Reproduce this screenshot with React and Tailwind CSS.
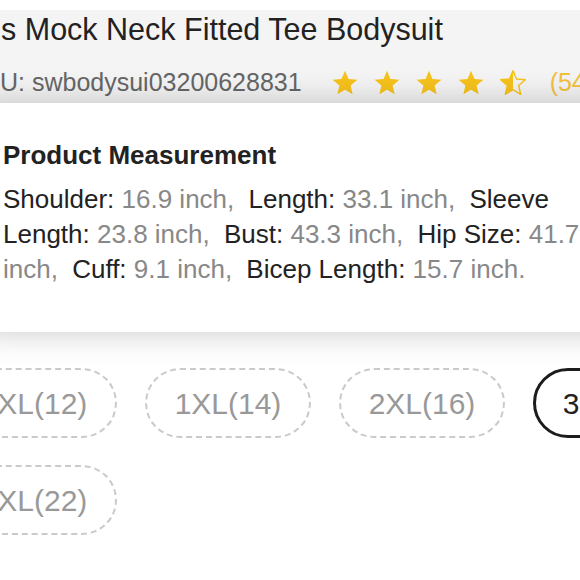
import React from "react";

const measurements = [
    ["Shoulder:", "16.9 inch,"],
    ["Length:", "33.1 inch,"],
    ["Sleeve Length:", "23.8 inch,"],
    ["Bust:", "43.3 inch,"],
    ["Hip Size:", "41.7 inch,"],
    ["Cuff:", "9.1 inch,"],
    ["Bicep Length:", "15.7 inch."],
];

const sizes = ["0XL(12)", "1XL(14)", "2XL(16)", "3XL(18)", "4XL(20)", "5XL(22)"];

const STAR = "M12 17.27L18.18 21l-1.64-7.03L22 9.24l-7.19-.61L12 2 9.19 8.63 2 9.24l5.46 4.73L5.82 21z";

const Star = ({ half }) => (
    <svg width="26" height="25" viewBox="1.5 1.5 21 20">
        <defs>
            <clipPath id="leftHalf">
                <rect x="0" y="0" width="12" height="24" />
            </clipPath>
        </defs>
        {half ? (
            <>
                <path d={STAR} fill="none" stroke="#f6c21c" strokeWidth="1.2" strokeLinejoin="round" />
                <path d={STAR} fill="#f6c21c" clipPath="url(#leftHalf)" />
            </>
        ) : (
            <path d={STAR} fill="#f6c21c" />
        )}
    </svg>
);

const App = () => {
    return (
        <div className="relative w-[580px] h-[580px] overflow-hidden bg-white font-['Liberation_Sans',Arial,sans-serif]">
            <div className="pt-[10px]">
                <div className="h-[93px] bg-[#f4f4f4]">
                    <h1 className="pt-[2px] pl-[1px] text-[30.5px] leading-[34px] text-[#222] whitespace-nowrap">
                        s Mock Neck Fitted Tee Bodysuit
                    </h1>
                    <div className="mt-[21px] flex items-center whitespace-nowrap">
                        <span className="text-[25px] leading-[30px] text-[#666]">U: swbodysui03200628831</span>
                        <div className="ml-[30px] flex items-center gap-[16px]">
                            <Star />
                            <Star />
                            <Star />
                            <Star />
                            <Star half />
                        </div>
                        <span className="ml-[24px] text-[25px] leading-[30px] text-[#f3c03a]">(54)</span>
                    </div>
                </div>

                <div className="pt-[265px] ml-[-49px] w-[960px] flex flex-wrap gap-x-[28px] gap-y-[27px]">
                    {sizes.map((s) => (
                        <div
                            key={s}
                            className={`w-[166px] h-[70px] rounded-full flex items-center justify-center text-[30px] ${
                                s === "3XL(18)"
                                    ? "border-[3px] border-solid border-[#1c1c1c] text-[#222]"
                                    : "border-2 border-dashed border-[#cacaca] text-[#999]"
                            }`}
                        >
                            {s}
                        </div>
                    ))}
                </div>
            </div>

            <div className="absolute top-[103px] left-[-20px] w-[640px] h-[229px] bg-white shadow-[0_0_30px_rgba(0,0,0,0.22)] pl-[23px] pt-[37px]">
                <h2 className="text-[26px] leading-[30px] font-bold text-[#222]">Product Measurement</h2>
                <p className="mt-[12px] w-[600px] text-[26px] leading-[35px] text-[#222]">
                    {measurements.map(([label, value]) => (
                        <React.Fragment key={label}>
                            <span className="mr-[7px]">
                                {label} <span className="text-[#888]">{value}</span>
                            </span>{" "}
                        </React.Fragment>
                    ))}
                </p>
            </div>
        </div>
    );
};

export default App;
